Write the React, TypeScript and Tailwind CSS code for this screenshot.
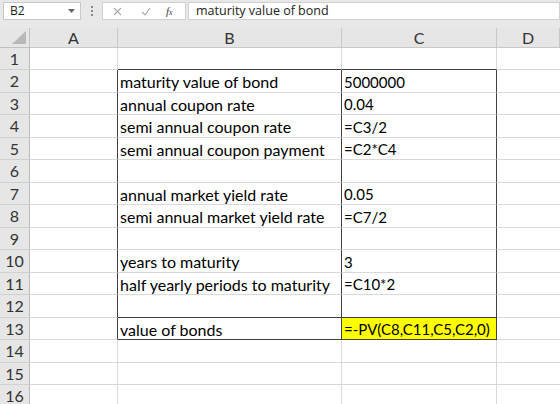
import React from "react";

const rows: { b?: string; c?: string }[] = [
  {},
  { b: "maturity value of bond", c: "5000000" },
  { b: "annual coupon rate", c: "0.04" },
  { b: "semi annual coupon rate", c: "=C3/2" },
  { b: "semi annual coupon payment", c: "=C2*C4" },
  {},
  { b: "annual market yield rate", c: "0.05" },
  { b: "semi annual market yield rate", c: "=C7/2" },
  {},
  { b: "years to maturity", c: "3" },
  { b: "half yearly periods to maturity", c: "=C10*2" },
  {},
  { b: "value of bonds", c: "=-PV(C8,C11,C5,C2,0)" },
  {},
  {},
  {},
];

const LIGHT = "#d9d9d9";
const DARK = "#404040";

export default function App() {
  return (
    <div
      className="w-[560px] h-[404px] overflow-hidden bg-white text-black"
      style={{ fontFamily: "Lato, 'Open Sans', sans-serif" }}
    >
      {/* formula bar */}
      <div className="h-[28px] bg-[#e8e8e8] flex items-start pt-[2px] pl-[3px] pr-0">
        <div className="w-[78px] h-[18px] bg-white border border-[#c8c8c8] flex items-center pl-[6px] pr-[5px] text-[12px] text-[#222]" style={{ fontFamily: "'Open Sans', sans-serif" }}>
          <span className="flex-1">B2</span>
          <svg width="7" height="4" viewBox="0 0 7 4"><path d="M0 0h7L3.5 4z" fill="#666" /></svg>
        </div>
        <div className="w-[21px] h-[18px] flex flex-col items-center justify-center gap-[2px]">
          <span className="w-[2px] h-[2px] bg-[#888]" />
          <span className="w-[2px] h-[2px] bg-[#888]" />
          <span className="w-[2px] h-[2px] bg-[#888]" />
        </div>
        <div className="w-[84px] h-[18px] bg-white border border-[#d0d0d0] flex items-center">
          <svg className="ml-[10px]" width="9" height="9" viewBox="0 0 9 9"><path d="M1 1l7 7M8 1l-7 7" stroke="#a8a8a8" strokeWidth="1.1" /></svg>
          <svg className="ml-[19px]" width="10" height="9" viewBox="0 0 10 9"><path d="M1 5l3 3 5-7" stroke="#a8a8a8" strokeWidth="1.1" fill="none" /></svg>
          <span className="ml-[15px] text-[11px] italic text-[#444]" style={{ fontFamily: "'Liberation Serif', serif" }}>
            f<span className="text-[8px]">x</span>
          </span>
        </div>
        <div className="flex-1 h-[18px] bg-white border border-[#d0d0d0] ml-[2px] flex items-center pl-[7px] text-[12.5px] text-[#222]" style={{ fontFamily: "'Open Sans', sans-serif" }}>
          maturity value of bond
        </div>
      </div>

      {/* column headers */}
      <div className="grid grid-cols-[30px_88px_224px_155px_1fr] h-[20px] bg-[#e6e6e6] text-[16px] text-[#333]">
        <div className="relative border-r border-b border-[#c0c0c0]">
          <svg className="absolute right-[3px] bottom-[3px]" width="14" height="13" viewBox="0 0 14 13"><path d="M14 0V13H0z" fill="#b8b8b8" /></svg>
        </div>
        {["A", "B", "C", "D"].map((l) => (
          <div key={l} className="border-r border-b border-[#c8c8c8] flex items-center justify-center leading-none">
            {l}
          </div>
        ))}
      </div>

      {/* rows */}
      {rows.map((r, i) => {
        const n = i + 1;
        const inBox = n >= 2 && n <= 13;
        const bottomDark = n === 1 || n === 12 || n === 13;
        const h = n % 2 === 1 ? "h-[22px]" : "h-[23px]";
        return (
          <div key={n} className={`grid grid-cols-[30px_88px_224px_155px_1fr] ${h} text-[16px]`}>
            <div className="bg-[#e6e6e6] border-r border-b border-r-[#bcbcbc] border-b-[#d0d0d0] flex items-center justify-center text-[#333] leading-none">
              {n}
            </div>
            <div
              className="border-r border-b"
              style={{ borderRightColor: inBox ? DARK : LIGHT, borderBottomColor: LIGHT }}
            />
            <div
              className="border-r border-b flex items-center pl-[2px] whitespace-nowrap leading-none pt-[2px]"
              style={{ borderRightColor: inBox ? DARK : LIGHT, borderBottomColor: bottomDark ? DARK : LIGHT }}
            >
              {r.b}
            </div>
            <div
              className={`border-r border-b flex items-center pl-[2px] whitespace-nowrap leading-none pt-[2px] text-[15px] ${n === 13 ? "bg-[#ffff00]" : ""}`}
              style={{ borderRightColor: inBox ? DARK : LIGHT, borderBottomColor: bottomDark ? DARK : LIGHT }}
            >
              {r.c}
            </div>
            <div className="border-b" style={{ borderBottomColor: LIGHT }} />
          </div>
        );
      })}
    </div>
  );
}
